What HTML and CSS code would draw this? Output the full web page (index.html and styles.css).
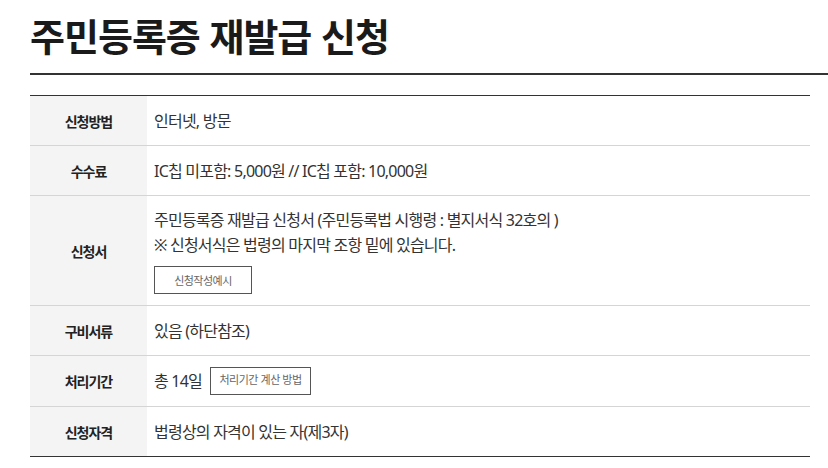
FILE: index.html
```html
<!DOCTYPE html>
<html lang="ko">
<head>
<meta charset="utf-8">
<title>주민등록증 재발급 신청</title>
<link rel="stylesheet" href="styles.css">
</head>
<body>
<div class="page">
  <h1 class="title">주민등록증 재발급 신청</h1>
  <table class="info">
    <tbody>
      <tr>
        <th>신청방법</th>
        <td>인터넷, 방문</td>
      </tr>
      <tr>
        <th>수수료</th>
        <td>IC칩 미포함: 5,000원 // IC칩 포함: 10,000원</td>
      </tr>
      <tr class="tall">
        <th>신청서</th>
        <td>
          <p class="line">주민등록증 재발급 신청서 (주민등록법 시행령 : 별지서식 32호의 )</p>
          <p class="line">※ 신청서식은 법령의 마지막 조항 밑에 있습니다.</p>
          <span class="btn btn-wide">신청작성예시</span>
        </td>
      </tr>
      <tr>
        <th>구비서류</th>
        <td>있음 (하단참조)</td>
      </tr>
      <tr class="roomy">
        <th>처리기간</th>
        <td><span class="days">총 14일</span><span class="btn btn-inline">처리기간 계산 방법</span></td>
      </tr>
      <tr class="last">
        <th>신청자격</th>
        <td>법령상의 자격이 있는 자(제3자)</td>
      </tr>
    </tbody>
  </table>
</div>
</body>
</html>
```

FILE: styles.css
```css
* { box-sizing: border-box; }
html, body { margin: 0; padding: 0; background: #fff; }
body {
  font-family: "Noto Sans CJK KR", "Noto Sans", sans-serif;
  color: #222;
}
.page {
  padding-left: 30px;
}
.title {
  margin: 0;
  height: 75px;
  padding-top: 12px;
  font-size: 38px;
  line-height: 46px;
  font-weight: 700;
  letter-spacing: -1px;
  color: #1a1a1a;
  border-bottom: 2px solid #333;
}
.info {
  margin-top: 20px;
  width: 780px;
  border-collapse: collapse;
  border-top: 1px solid #333;
}
.info tr { border-bottom: 1px solid #d5d5d5; }
.info tr.last { border-bottom: 1px solid #333; }
.info th {
  width: 117px;
  height: 50px;
  background: #f4f4f4;
  font-size: 14px;
  font-weight: 700;
  letter-spacing: -1px;
  color: #222;
  text-align: center;
  padding: 0;
}
.info tr.roomy th { height: 51px; }
.info td {
  height: 50px;
  padding: 0 0 0 7px;
  font-family: "Noto Sans", "Noto Sans CJK KR", sans-serif;
  font-size: 16px;
  line-height: 24px;
  letter-spacing: -0.78px;
  color: #333;
  text-align: left;
}
.info tr.roomy td { height: 51px; }
.info tr.tall td {
  padding-top: 12px;
  padding-bottom: 11px;
}
.line {
  margin: 0;
  line-height: 25px;
}
.btn {
  display: inline-flex;
  align-items: center;
  justify-content: center;
  border: 1px solid #555;
  font-family: "Noto Sans CJK KR", sans-serif;
  font-size: 11px;
  line-height: 14px;
  letter-spacing: -0.5px;
  color: #666;
  background: #fff;
}
.btn-wide {
  margin-top: 8px;
  width: 98px;
  height: 28px;
}
.btn-inline {
  margin-left: 8px;
  width: 101px;
  height: 28px;
  padding-bottom: 4px;
  vertical-align: middle;
}
.days { vertical-align: middle; }
```
